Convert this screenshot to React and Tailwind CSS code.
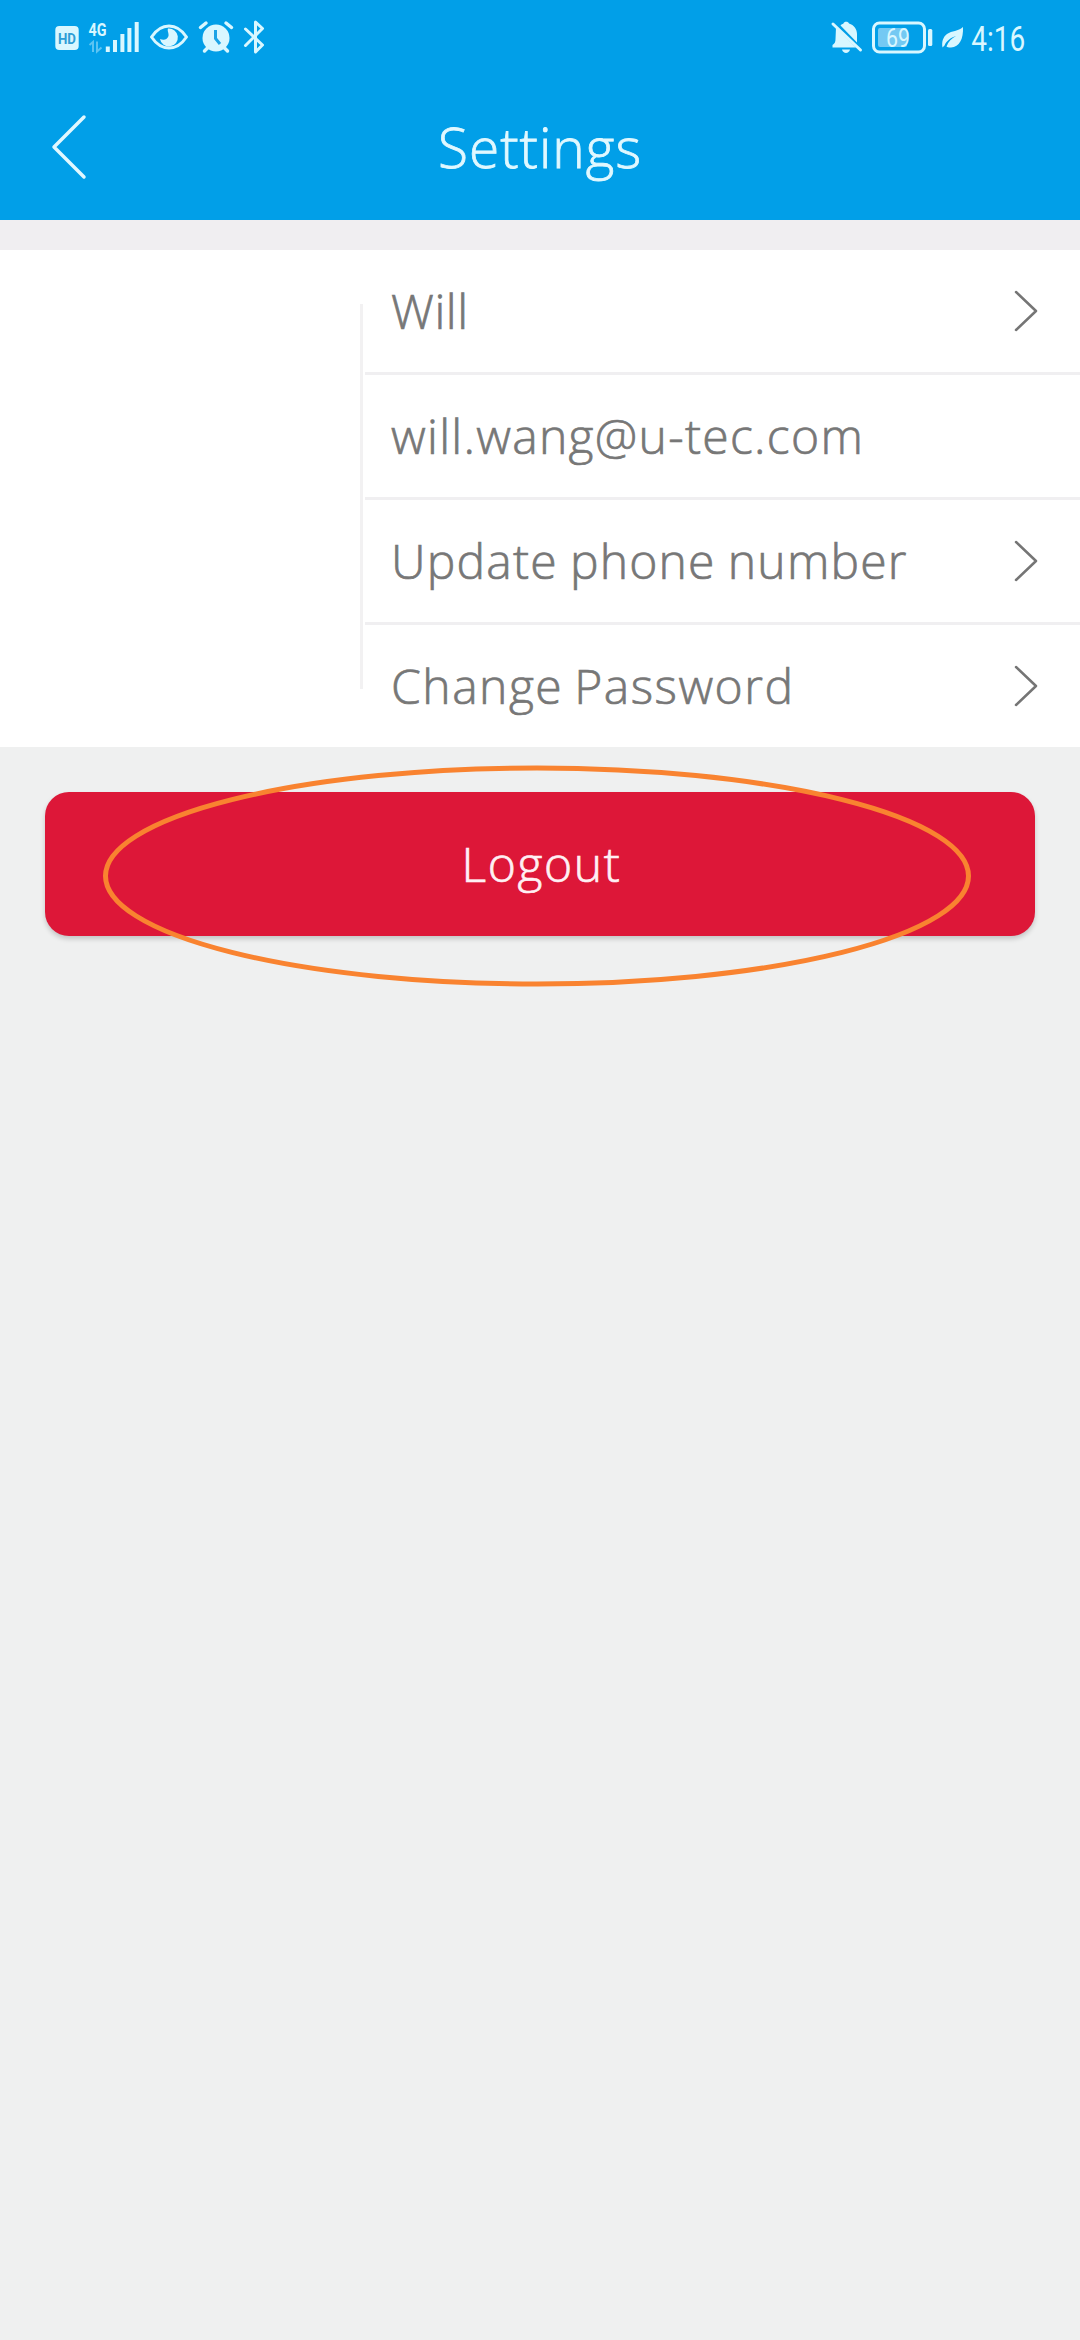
const ROWS = [
    { label: 'Will', arrow: true, spacing: 'tracking-[0.6px]' },
    { label: 'will.wang@u-tec.com', arrow: false, spacing: 'tracking-[1.3px]' },
    { label: 'Update phone number', arrow: true, spacing: 'tracking-[1.2px] [word-spacing:-1.5px]' },
    { label: 'Change Password', arrow: true, spacing: 'tracking-[1.5px] [word-spacing:-3px]' },
];

const StatusLeft = () => (
    <svg width="220" height="40" viewBox="50 16 220 40" fill="none" className="text-[#d9f7ff]">
        <rect x="55.3" y="26" width="23.4" height="24" rx="4" fill="currentColor" />
        <text x="58" y="43.5" fontSize="15" fontWeight="700" textLength="18" lengthAdjust="spacingAndGlyphs" fill="#2f9ed6" fontFamily="Roboto, sans-serif">HD</text>
        <text x="88.5" y="35.8" fontSize="19" fontWeight="700" textLength="18" lengthAdjust="spacingAndGlyphs" fill="currentColor" fontFamily="Roboto, sans-serif">4G</text>
        <path d="M89.5 45l3.500-3v10M97 41.500v10l4.500-4" stroke="#5cc4f2" strokeWidth="2" />
        <path d="M107.800 46.500v5.500M115 40v12M122.400 34v18M129.400 28v24M136.700 22v30" stroke="currentColor" strokeWidth="4" />
        {/* eye comfort */}
        <path d="M151.500 37c5-7.500 11-11 17.500-11s12.500 3.500 17.500 11c-5 7.500-11 11-17.500 11s-12.500-3.500-17.500-11z" stroke="currentColor" strokeWidth="3" strokeLinejoin="round" />
        <path d="M168 28.500a9 9 0 1 1-8 10.500c4 1.500 7.500.5 8.500-3 .6-3-1.500-5-.5-7.500z" fill="currentColor" />
        {/* alarm */}
        <circle cx="216" cy="38" r="13.500" fill="currentColor" />
        <path d="M200.500 27.500l5.500-4.500M231.500 27.500l-5.500-4.500M208 47.500l-3.500 3.500M224 47.500l3.500 3.500" stroke="currentColor" strokeWidth="3.500" strokeLinecap="round" />
        <path d="M215.500 30v8.500l4.500 5.500" stroke="#1ca4e6" strokeWidth="3" />
        {/* bluetooth */}
        <path d="M245.500 29l17 16-7 7V22l7 6.500-17 17" stroke="currentColor" strokeWidth="3" strokeLinejoin="round" strokeLinecap="round" />
    </svg>
);

const StatusRight = () => (
    <svg width="140" height="40" viewBox="828 16 140 40" fill="none" className="text-[#d9f7ff]">
        {/* muted bell */}
        <path d="M840.500 25.500c1-1 1.800-1.500 3-2 .3-2.500 5-2.500 5.500 0 5 1.500 8 5.500 8 10.500v8.500zM836 27.500l20 20H832.500v-2.500c2.500-1.500 3-3.500 3-6z" fill="currentColor" />
        <path d="M833 24l27.500 26" stroke="currentColor" strokeWidth="3" strokeLinecap="round" />
        <path d="M842 49.500h8c-1 4.500-7 4.500-8 0z" fill="currentColor" />
        {/* battery */}
        <rect x="873.500" y="23" width="51" height="29" rx="6" stroke="currentColor" strokeWidth="3" />
        <rect x="878" y="28" width="29" height="19" rx="2" fill="#74c9f3" />
        <text x="886" y="46.500" fontSize="25" textLength="24" lengthAdjust="spacingAndGlyphs" fill="currentColor" fontFamily="Roboto, sans-serif">69</text>
        <rect x="928" y="29" width="4.300" height="17" rx="1.500" fill="currentColor" />
        {/* power saving leaf */}
        <path d="M963 27c.5 12-3.500 20-12 20.500-2 .2-3.500-.3-4.500-1 2-5 5-8 9.500-10.500-5.500 1.500-9.500 5-11.500 9.500l-2 2c-1-5.500.5-10.500 4.500-13.500 5-3.500 11-2.500 16-7z" fill="currentColor" />
    </svg>
);

const Header = () => (
    <header className="h-[220px] bg-[#019fe8] flex flex-col">
        <div className="h-[74px] pl-[50px] pr-[53px] pt-4 flex justify-between">
            <StatusLeft />
            <div className="flex">
                <StatusRight />
                <span className="w-[59px] pl-1 pt-px text-[35px] leading-[45px] text-[#d9f7ff] font-['Roboto'] origin-left scale-x-[0.8] whitespace-nowrap">4:16</span>
            </div>
        </div>
        <div className="h-[146px] grid grid-cols-[1fr_auto_1fr] items-center">
            <svg width="40" height="66" viewBox="0 0 40 66" fill="none" className="ml-[49px]">
                <path d="M35 3L5 33l30 30" stroke="#e0f8ff" strokeWidth="3.500" strokeLinecap="round" strokeLinejoin="round" />
            </svg>
            <h1 className="text-[55px] leading-[74px] font-light tracking-[1px] text-[#e0f8ff] [-webkit-text-stroke:0.8px]">Settings</h1>
        </div>
    </header>
);

const Chevron = () => (
    <svg width="26" height="44" viewBox="0 0 26 44" fill="none">
        <path d="M3 3l20 19L3 41" stroke="#757575" strokeWidth="2.500" strokeLinecap="round" strokeLinejoin="round" />
    </svg>
);

const AccountCard = () => (
    <section className="relative h-[497px] bg-white pl-[365px]">
        <div className="absolute left-[360px] top-[54px] h-[385px] w-[3px] bg-[#f2f1f2]" />
        {ROWS.map((row) => (
            <div key={row.label} className="h-[125px] last:h-[122px] pl-[26px] pr-[41px] flex items-center justify-between border-b-[3px] border-[#f0eff1] last:border-b-0">
                <span className={`text-[48px] leading-[66px] font-light text-[#777777] whitespace-nowrap [-webkit-text-stroke:0.7px] ${row.spacing}`}>{row.label}</span>
                {row.arrow && <Chevron />}
            </div>
        ))}
    </section>
);

const App = () => {
    return (
        <div className="w-[1080px] h-[2340px] overflow-hidden bg-[#eff0f0] font-['Open_Sans',sans-serif]">
            <Header />
            <div className="h-[30px] bg-[#f0eef1]" />
            <AccountCard />
            <div className="relative mt-[45px] px-[45px]">
                <button className="block w-full h-[144px] pb-px pl-[3px] rounded-[24px] bg-[#dd1738] shadow-[0_3px_5px_rgba(0,0,0,0.18)] text-[48px] font-light tracking-[1.6px] text-[#fff0f4] [-webkit-text-stroke:0.7px]">
                    Logout
                </button>
                <svg width="872" height="226" viewBox="0 0 872 226" fill="none" className="absolute left-[101px] -top-[29px]">
                    <ellipse cx="436" cy="113" rx="431.500" ry="108" stroke="#f98330" strokeWidth="5" />
                </svg>
            </div>
        </div>
    );
};

export default App;
